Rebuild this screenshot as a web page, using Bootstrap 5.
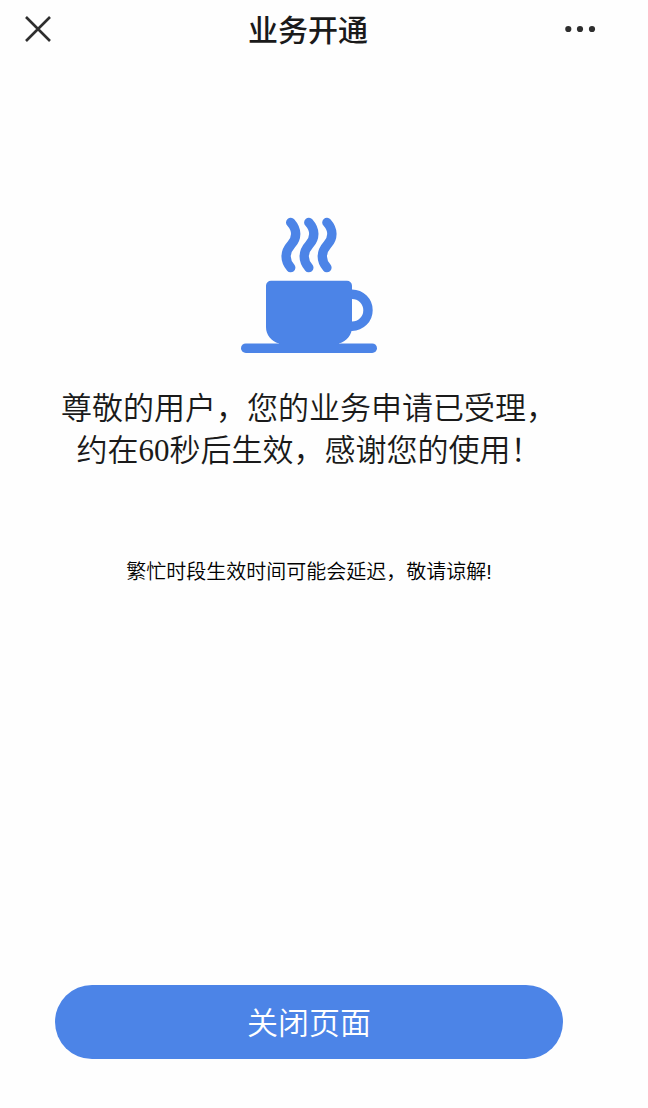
<!DOCTYPE html>
<html lang="zh-CN">
<head>
<meta charset="utf-8">
<meta name="viewport" content="width=device-width, initial-scale=1">
<title>业务开通</title>
<link href="https://cdn.jsdelivr.net/npm/bootstrap@5.3.0/dist/css/bootstrap.min.css" rel="stylesheet">
<style>
  body { background: #fefefe; color: #1a1a1a; font-family: "Liberation Serif", "Noto Sans CJK SC", sans-serif; }
  .page { padding-right: 30px; }
  .topbar { height: 58px; padding: 0 22px 0 24px; }
  .topbar-title { padding-top: 4px; font-size: 30px; line-height: 40px; font-weight: 500; }
  .icon-btn { color: #2e2e2e; line-height: 0; }
  .result { padding-top: 159px; }
  .message { margin-top: 35px; font-size: 31px; line-height: 42px; font-weight: 350; }
  .hint { margin-top: 85px; font-size: 20px; line-height: 30px; font-weight: 350; color: #000; font-family: "Liberation Sans", "Noto Sans CJK SC", sans-serif; }
  .footer-bar { padding: 0 55px 49px; }
  .btn-close-page { --bs-btn-color: #fff; --bs-btn-bg: #4c84e7; --bs-btn-hover-color: #fff; --bs-btn-hover-bg: #3f76d8; --bs-btn-active-color: #fff; --bs-btn-active-bg: #3869c4; height: 74px; font-size: 31px; line-height: 40px; font-weight: 350; }
</style>
</head>
<body>
<div class="page min-vh-100 d-flex flex-column">
  <header class="topbar d-flex align-items-center justify-content-between">
    <button type="button" class="icon-btn btn border-0 p-0" aria-label="关闭">
      <svg width="28" height="28" viewBox="0 0 28 28" fill="none" stroke="currentColor" stroke-width="2.6" aria-hidden="true"><path d="M2 2 26 26M26 2 2 26"/></svg>
    </button>
    <h1 class="topbar-title mb-0">业务开通</h1>
    <button type="button" class="icon-btn btn border-0 p-0" aria-label="更多">
      <svg width="32" height="28" viewBox="0 0 32 28" fill="currentColor" aria-hidden="true"><circle cx="4.3" cy="14" r="3.1"/><circle cx="16" cy="14" r="3.1"/><circle cx="28" cy="14" r="3.1"/></svg>
    </button>
  </header>
  <main class="result flex-grow-1 text-center">
    <svg class="d-block mx-auto" width="136" height="136" viewBox="0 0 136 136" fill="#4c84e7" aria-hidden="true">
      <g fill="none" stroke="#4c84e7" stroke-width="9.400" stroke-linecap="round">
        <path id="steam" d="M49.700 5.400C56.500 13 56 21 50.300 27.500C43.500 35 43.500 43.500 49.700 50.600"/>
        <use href="#steam" x="18.100"/>
        <use href="#steam" x="36.200"/>
        <path d="M110 77.200h1a16 16 0 0 1 0 32h-4"/>
      </g>
      <path d="M30 63.700h76a5 5 0 0 1 5 5V110C111 118 106 124 98 126.500V129H38V126.500C30 124 25 118 25 110V68.700a5 5 0 0 1 5-5Z"/>
      <rect y="126.400" width="136" height="9.600" rx="4.800"/>
    </svg>
    <p class="message mb-0">尊敬的用户，您的业务申请已受理，<br>约在60秒后生效，感谢您的使用！</p>
    <p class="hint mb-0">繁忙时段生效时间可能会延迟，敬请谅解!</p>
  </main>
  <footer class="footer-bar">
    <button type="button" class="btn btn-close-page rounded-pill w-100 border-0 p-0 pt-1">关闭页面</button>
  </footer>
</div>
<script src="https://cdn.jsdelivr.net/npm/bootstrap@5.3.0/dist/js/bootstrap.bundle.min.js"></script>
</body>
</html>
